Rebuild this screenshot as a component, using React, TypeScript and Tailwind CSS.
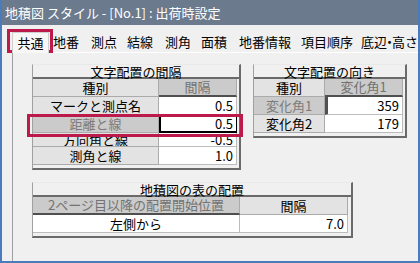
const tabs = [
  { label: "地番", w: "w-[38px]" },
  { label: "測点", w: "w-[36px]" },
  { label: "結線", w: "w-[38px]" },
  { label: "測角", w: "w-[36px]" },
  { label: "面積", w: "w-[38px]" },
  { label: "地番情報", w: "w-[62px]" },
  { label: "項目順序", w: "w-[60px]" },
];

const frame =
  "border-l border-t border-l-[#a0a0a0] border-t-[#e9e9e9] border-r-2 border-b-2 border-r-[#6a6a6a] border-b-[#6a6a6a] bg-[#f0f0f0]";
const label = "flex items-center justify-center bg-[#e3e3e3] border-r border-b border-[#ababab]";
const labelSel = "flex items-center justify-center bg-[#cbcbcb] text-[#7b7b7b] border-r border-b border-[#ababab]";
const value = "flex items-center justify-end pr-[3px] bg-white border-r border-b border-[#bcbcbc]";
const headSel =
  "flex items-center justify-center bg-[#cbcbcb] text-[#727272] border-r border-r-[#ababab] border-b-2 border-b-[#4f4f4f]";

function Title({ text }: { text: string }) {
  return (
    <div className="h-[14px] flex items-center justify-center border-b-2 border-[#6a6a6a] leading-none">{text}</div>
  );
}

export default function App() {
  return (
    <div className="w-[420px] h-[263px] overflow-hidden flex flex-col border-x-2 border-b-2 border-[#4a7cbd] bg-[#f0f0f0] text-[13px] text-black font-['Noto_Sans_CJK_JP',sans-serif] relative">
      {/* タイトルバー */}
      <div className="h-[25px] shrink-0 bg-[#6b7a8d] text-white flex items-center pl-[3px] leading-none">
        地積図 スタイル - [No.1] : 出荷時設定
      </div>

      {/* タブ */}
      <div className="h-[27px] shrink-0 flex pl-[10px] whitespace-nowrap">
        <div className="mt-[7px] h-[21px] w-[38px] flex items-center justify-center bg-[#f7f7f7] border border-b-0 border-[#cfcfcf] z-10">
          共通
        </div>
        <div className="flex pl-[4px] pt-[7px]">
          {tabs.map((t) => (
            <div key={t.label} className={`${t.w} h-[20px] flex items-center`}>
              {t.label}
            </div>
          ))}
          <div className="h-[20px] flex items-center">
            底辺<span className="-mx-[4px]">・</span>高さ
          </div>
        </div>
      </div>

      {/* タブページ */}
      <div className="flex-1 ml-[10px] border-l border-t border-l-[#a0a0a0] border-t-white bg-[#f0f0f0] pt-[11px] pl-[19px]">
        <div className="flex items-start gap-[12px]">
          {/* 文字配置の間隔 */}
          <div className={`w-[209px] ${frame}`}>
            <Title text="文字配置の間隔" />
            <div className="w-[204px] pb-[3px]">
              <div className="flex h-[18px]">
                <div className={`w-[126px] ${label}`}>種別</div>
                <div className={`w-[78px] ${headSel}`}>間隔</div>
              </div>
              <div className="flex h-[18px]">
                <div className={`w-[126px] ${label}`}>マークと測点名</div>
                <div className={`w-[78px] ${value}`}>0.5</div>
              </div>
              <div className="flex h-[18px]">
                <div className={`w-[126px] ${labelSel}`}>距離と線</div>
                <div className="w-[78px] flex items-center justify-end pr-[3px] bg-white border border-black border-l-2 border-b-2">
                  0.5
                </div>
              </div>
              <div className="flex h-[14px]">
                <div className={`w-[126px] ${label}`}>
                  <div className="mt-[4px] h-[9px] overflow-hidden">
                    <div className="-mt-[4px] leading-[13px]">方向角と線</div>
                  </div>
                </div>
                <div className={`w-[78px] ${value}`}>
                  <div className="mt-[4px] h-[9px] overflow-hidden">
                    <div className="-mt-[4px] leading-[13px]">-0.5</div>
                  </div>
                </div>
              </div>
              <div className="flex h-[18px]">
                <div className={`w-[126px] ${label}`}>測角と線</div>
                <div className={`w-[78px] ${value}`}>1.0</div>
              </div>
            </div>
          </div>

          {/* 文字配置の向き */}
          <div className={`w-[154px] ${frame}`}>
            <Title text="文字配置の向き" />
            <div className="w-[149px] pb-[3px]">
              <div className="flex h-[18px]">
                <div className={`w-[71px] ${label}`}>種別</div>
                <div className={`w-[78px] ${headSel}`}>変化角1</div>
              </div>
              <div className="flex h-[18px]">
                <div className={`w-[71px] ${labelSel}`}>変化角1</div>
                <div className="w-[78px] flex items-center justify-end pr-[3px] bg-white border-l-[3px] border-l-[#505050] border-r border-b border-[#bcbcbc]">
                  359
                </div>
              </div>
              <div className="flex h-[18px]">
                <div className={`w-[71px] ${label}`}>変化角2</div>
                <div className={`w-[78px] ${value}`}>179</div>
              </div>
            </div>
          </div>
        </div>

        {/* 地積図の表の配置 */}
        <div className={`mt-[12px] w-[321px] ${frame}`}>
          <Title text="地積図の表の配置" />
          <div className="w-[315px] pb-[3px]">
            <div className="flex h-[18px]">
              <div className={`w-[207px] ${headSel}`}>2ページ目以降の配置開始位置</div>
              <div className={`w-[108px] ${label}`}>間隔</div>
            </div>
            <div className="flex h-[18px]">
              <div className="w-[207px] flex items-center justify-center bg-white border-r border-b border-[#bcbcbc]">
                左側から
              </div>
              <div className={`w-[108px] ${value}`}>7.0</div>
            </div>
          </div>
        </div>
      </div>

      {/* 強調枠 */}
      <div className="absolute left-[5px] top-[29px] w-[46px] h-[24px] border-[3px] border-[#bb1a4a]" />
      <div className="absolute left-[25px] top-[114px] w-[216px] h-[23px] border-[3px] border-[#bb1a4a]" />
    </div>
  );
}
